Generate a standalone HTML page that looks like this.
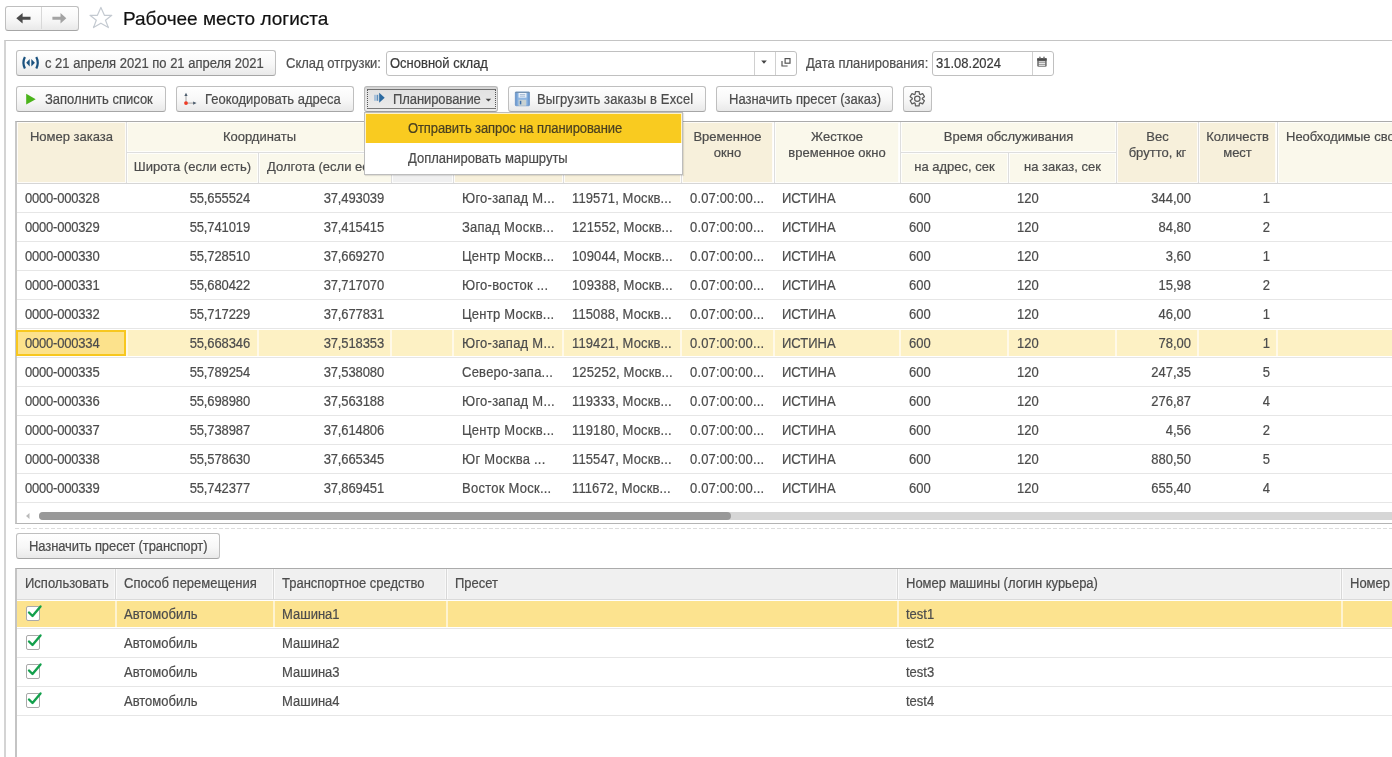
<!DOCTYPE html><html><head><meta charset="utf-8"><style>
*{box-sizing:border-box;margin:0;padding:0}
html,body{width:1392px;height:757px;overflow:hidden;background:#fff;font-family:"Liberation Sans", sans-serif;font-size:13px;color:#4c4c4c}
.a{position:absolute}
.t,.hd{-webkit-text-stroke:0.2px currentColor}
.t{transform:scaleY(1.08);transform-origin:0 12.3px}
#w{position:absolute;left:0;top:0;width:1392px;height:757px;overflow:hidden;will-change:transform}
.t{position:absolute;white-space:nowrap;line-height:15px}
.n{letter-spacing:-0.2px}
.c{letter-spacing:-0.12px}
.e{letter-spacing:0.25px}
.btn{position:absolute;border:1px solid #bfbfbf;border-bottom-color:#a6a6a6;border-radius:3px;background:linear-gradient(#ffffff,#f7f7f7 55%,#e9e9e9);}
.inp{position:absolute;border:1px solid #c0c0c0;border-radius:3px;background:#fff}
.hd{position:absolute;white-space:nowrap;text-align:center;line-height:16px;overflow:hidden}
</style></head><body><div id="w">
<div class="btn" style="left:5px;top:6px;width:74px;height:25px"></div>
<div class="a" style="left:41px;top:7px;width:1px;height:22px;background:#d8d8d8"></div>
<svg class="a" style="left:0;top:0" width="120" height="40"><path d="M16.3 18.2 L22.6 12.9 L22.6 16.8 L30.5 16.8 L30.5 19.7 L22.6 19.7 L22.6 23.4 Z" fill="#4a4a4a"/><path d="M66.3 18.2 L60.5 12.9 L60.5 16.8 L52.4 16.8 L52.4 19.7 L60.5 19.7 L60.5 23.4 Z" fill="#a3a3a3"/><path d="M100.9 7.4 L104.4 15.3 L111.8 15.3 L105.5 20.2 L108.4 27.6 L100.9 23.2 L93.5 27.6 L96.3 20.2 L90 15.3 L97.4 15.3 Z" fill="none" stroke="#c4cad1" stroke-width="1.2" stroke-linejoin="round"/></svg>
<div class="t" style="left:123px;top:8px;font-size:19px;line-height:22px;color:#111;transform:none">Рабочее место логиста</div>
<div class="a" style="left:4px;top:40px;width:1400px;height:800px;border-left:2px solid #d4d4d4;border-top:1px solid #c4c4c4"></div>
<div class="btn" style="left:16px;top:50px;width:260px;height:26px"></div>
<svg class="a" style="left:20px;top:54px" width="22" height="18"><path d="M4.9 3.1 Q2 8.85 4.9 14.6" fill="none" stroke="#1b527f" stroke-width="2.2"/><path d="M16.3 3.1 Q19.2 8.85 16.3 14.6" fill="none" stroke="#1b527f" stroke-width="2.2"/><path d="M6.2 8.8 L9.7 5 L9.7 12.4Z" fill="#1b527f"/><path d="M11.3 5 L14.9 8.8 L11.3 12.4Z" fill="#1b527f"/></svg>
<div class="t" style="left:45px;top:56px">с 21 апреля 2021 по 21 апреля 2021</div>
<div class="t" style="left:286px;top:56px;color:#505050">Склад отгрузки:</div>
<div class="inp" style="left:386px;top:51px;width:411px;height:25px"></div>
<div class="t" style="left:390px;top:56px;color:#3a3a3a">Основной склад</div>
<div class="a" style="left:754px;top:52px;width:1px;height:23px;background:#d0d0d0"></div>
<div class="a" style="left:775px;top:52px;width:1px;height:23px;background:#d0d0d0"></div>
<svg class="a" style="left:755px;top:52px" width="40" height="23"><path d="M6.2 8.6 L11.8 8.6 L9 11.8 Z" fill="#444"/><rect x="30.1" y="6.6" width="4.9" height="4.6" fill="none" stroke="#555" stroke-width="1.2"/><path d="M27 9.1 V14 H32.6" fill="none" stroke="#555" stroke-width="1.2"/></svg>
<div class="t" style="left:806px;top:56px;color:#505050">Дата планирования:</div>
<div class="inp" style="left:932px;top:51px;width:122px;height:25px"></div>
<div class="t" style="left:936px;top:56px;color:#3a3a3a">31.08.2024</div>
<div class="a" style="left:1032px;top:52px;width:1px;height:23px;background:#d0d0d0"></div>
<svg class="a" style="left:1033px;top:52px" width="20" height="23"><rect x="4.2" y="6.2" width="9.5" height="8.6" rx="1.3" fill="#737373"/><rect x="4.2" y="6.2" width="9.5" height="2.4" fill="#4a4a4a"/><circle cx="6.9" cy="5.6" r="1" fill="#8a8a8a"/><circle cx="11" cy="5.6" r="1" fill="#8a8a8a"/><rect x="5.8" y="9.3" width="6.3" height="1.1" fill="#f4f4f4"/><rect x="5.8" y="11.1" width="6.3" height="1.1" fill="#f4f4f4"/><rect x="5.8" y="12.8" width="6.3" height="1" fill="#f4f4f4"/></svg>
<div class="btn" style="left:16px;top:86px;width:150px;height:26px"></div>
<div class="t" style="left:45px;top:92px;letter-spacing:0px">Заполнить список</div>
<svg class="a" style="left:24px;top:92px" width="14" height="14"><path d="M2.2 1.8 L11.7 7.3 L2.2 12.4 Z" fill="#4bb41b"/></svg>
<div class="btn" style="left:176px;top:86px;width:178px;height:26px"></div>
<div class="t" style="left:205px;top:92px;letter-spacing:0px">Геокодировать адреса</div>
<svg class="a" style="left:180px;top:88px" width="24" height="22"><path d="M6 7 V15.1 H13.5" fill="none" stroke="#a6a6a6" stroke-width="1"/><path d="M4.4 8.1 L6 4.7 L7.6 8.1Z" fill="#4a5b6b"/><path d="M13.1 13.5 L16.5 15.1 L13.1 16.7Z" fill="#4a5b6b"/><circle cx="6" cy="15.1" r="1.9" fill="#ee3a24"/></svg>
<div class="a" style="left:364px;top:86px;width:134px;height:26px;border:1px solid #b8b8b8;border-bottom-color:#9c9c9c;border-radius:3px;background:linear-gradient(#cfcfcf,#e2e2e2 14%,#e6e6e6 50%,#ececec)"></div>
<div class="a" style="left:367px;top:89px;width:129px;height:20px;border-top:1px solid #707070;border-bottom:1px solid #7a7a7a;border-left:1px dotted #555;border-right:1px dotted #555"></div>
<div class="t" style="left:393px;top:92px;letter-spacing:-0.08px">Планирование</div>
<svg class="a" style="left:368px;top:88px" width="20" height="20"><rect x="6" y="6.8" width="3" height="6" fill="#a9c1d9"/><rect x="9" y="6.8" width="1.3" height="6" fill="#5f8fbb"/><rect x="10.3" y="6.8" width="0.9" height="6" fill="#c9d7e4"/><path d="M11.2 4.8 L16.7 9.8 L11.2 14.7Z" fill="#2a69a0"/></svg>
<svg class="a" style="left:483px;top:96px" width="10" height="8"><path d="M2.6 2.7 L8.2 2.7 L5.4 5.6Z" fill="#444"/></svg>
<div class="btn" style="left:508px;top:86px;width:198px;height:26px"></div>
<div class="t" style="left:537px;top:92px;letter-spacing:0.12px">Выгрузить заказы в Excel</div>
<svg class="a" style="left:514px;top:91px" width="17" height="16"><defs><linearGradient id="fg" x1="0" x2="1"><stop offset="0" stop-color="#5f8fc8"/><stop offset="0.2" stop-color="#8fb6e2"/><stop offset="0.8" stop-color="#8fb6e2"/><stop offset="1" stop-color="#5f8fc8"/></linearGradient></defs><rect x="1.3" y="0.9" width="14.2" height="13.9" rx="0.8" fill="url(#fg)" stroke="#5a88c0" stroke-width="0.6"/><rect x="1.3" y="0.9" width="14.2" height="0.9" fill="#6f8aa6"/><rect x="4.6" y="2" width="7.8" height="4.6" fill="#eef4fb"/><path d="M5.8 3.6 h5.4 M5.8 5.2 h5.4" stroke="#86a4c4" stroke-width="0.7"/><rect x="4.6" y="8.8" width="7.6" height="5.9" fill="#c9d2d2"/><rect x="5.8" y="9.8" width="1.5" height="3.6" fill="#3d6ea8"/></svg>
<div class="btn" style="left:716px;top:86px;width:177px;height:26px"></div>
<div class="t" style="left:729px;top:92px;letter-spacing:0px">Назначить пресет (заказ)</div>
<div class="btn" style="left:903px;top:86px;width:29px;height:26px"></div>
<svg class="a" style="left:907px;top:89px" width="21" height="20"><g transform="translate(10.3,9.7)"><path d="M-2.19 -4.49 L-1.79 -7.18 L1.79 -7.18 L2.19 -4.49 L2.80 -4.15 L5.32 -5.14 L7.11 -2.04 L4.99 -0.35 L4.99 0.35 L7.11 2.04 L5.32 5.14 L2.80 4.15 L2.19 4.49 L1.79 7.18 L-1.79 7.18 L-2.19 4.49 L-2.80 4.15 L-5.32 5.14 L-7.11 2.04 L-4.99 0.35 L-4.99 -0.35 L-7.11 -2.04 L-5.32 -5.14 L-2.80 -4.15Z" fill="none" stroke="#5e5e5e" stroke-width="1.25" stroke-linejoin="round"/><circle r="2.7" fill="none" stroke="#5e5e5e" stroke-width="1.25"/></g></svg>
<div class="a" style="left:15px;top:121px;width:1400px;height:403px;border-top:1px solid #ababab;border-left:2px solid #c8c8c8;border-bottom:1px solid #b4b4b4;background:#fff"></div>
<div class="a" style="left:17px;top:122px;width:109px;height:61px;background:#F7F0DB;box-shadow:inset 0 0 0 1px rgba(255,255,255,0.8)"></div>
<div class="hd" style="left:17px;top:129px;width:109px">Номер заказа</div>
<div class="a" style="left:127px;top:122px;width:265px;height:30px;background:#FAF8EB;box-shadow:inset 0 0 0 1px rgba(255,255,255,0.8)"></div>
<div class="hd" style="left:127px;top:129px;width:265px">Координаты</div>
<div class="a" style="left:127px;top:153px;width:131px;height:30px;background:#FAF8EB;box-shadow:inset 0 0 0 1px rgba(255,255,255,0.8)"></div>
<div class="hd" style="left:127px;top:159px;width:131px">Широта (если есть)</div>
<div class="a" style="left:259px;top:153px;width:133px;height:30px;background:#FAF8EB;box-shadow:inset 0 0 0 1px rgba(255,255,255,0.8)"></div>
<div class="hd" style="left:267px;top:159px;width:125px;text-align:left">Долгота (если есть)</div>
<div class="a" style="left:392px;top:122px;width:61px;height:61px;background:#F0F0F0;box-shadow:inset 0 0 0 1px rgba(255,255,255,0.8)"></div>
<div class="a" style="left:454px;top:122px;width:109px;height:61px;background:#F7F0DB;box-shadow:inset 0 0 0 1px rgba(255,255,255,0.8)"></div>
<div class="hd" style="left:454px;top:129px;width:109px">Зона доставки</div>
<div class="a" style="left:564px;top:122px;width:117px;height:61px;background:#F7F0DB;box-shadow:inset 0 0 0 1px rgba(255,255,255,0.8)"></div>
<div class="hd" style="left:564px;top:129px;width:117px">Адрес</div>
<div class="a" style="left:682px;top:122px;width:91px;height:61px;background:#F7F0DB;box-shadow:inset 0 0 0 1px rgba(255,255,255,0.8)"></div>
<div class="hd" style="left:682px;top:129px;width:91px">Временное<br>окно</div>
<div class="a" style="left:775px;top:122px;width:124px;height:61px;background:#FAF8EB;box-shadow:inset 0 0 0 1px rgba(255,255,255,0.8)"></div>
<div class="hd" style="left:775px;top:129px;width:124px">Жесткое<br>временное окно</div>
<div class="a" style="left:901px;top:122px;width:215px;height:30px;background:#FAF8EB;box-shadow:inset 0 0 0 1px rgba(255,255,255,0.8)"></div>
<div class="hd" style="left:901px;top:129px;width:215px">Время обслуживания</div>
<div class="a" style="left:901px;top:153px;width:107px;height:30px;background:#FAF8EB;box-shadow:inset 0 0 0 1px rgba(255,255,255,0.8)"></div>
<div class="hd" style="left:901px;top:159px;width:107px">на адрес, сек</div>
<div class="a" style="left:1009px;top:153px;width:107px;height:30px;background:#FAF8EB;box-shadow:inset 0 0 0 1px rgba(255,255,255,0.8)"></div>
<div class="hd" style="left:1009px;top:159px;width:107px">на заказ, сек</div>
<div class="a" style="left:1117px;top:122px;width:81px;height:61px;background:#F7F0DB;box-shadow:inset 0 0 0 1px rgba(255,255,255,0.8)"></div>
<div class="hd" style="left:1117px;top:129px;width:81px">Вес<br>брутто, кг</div>
<div class="a" style="left:1199px;top:122px;width:77px;height:61px;background:#F7F0DB;box-shadow:inset 0 0 0 1px rgba(255,255,255,0.8)"></div>
<div class="hd" style="left:1199px;top:129px;width:77px">Количеств<br>мест</div>
<div class="a" style="left:1278px;top:122px;width:122px;height:61px;background:#FAF8EB;box-shadow:inset 0 0 0 1px rgba(255,255,255,0.8)"></div>
<div class="hd" style="left:1286px;top:129px;width:114px;text-align:left">Необходимые свойства</div>
<div class="a" style="left:17px;top:183px;width:1400px;height:1px;background:#d6d6d6"></div>
<div class="a" style="left:127px;top:152px;width:265px;height:1px;background:#dedede"></div>
<div class="a" style="left:901px;top:152px;width:215px;height:1px;background:#dedede"></div>
<div class="a" style="left:126px;top:122px;width:1px;height:61px;background:#dedede"></div>
<div class="a" style="left:258px;top:152px;width:1px;height:31px;background:#dedede"></div>
<div class="a" style="left:391px;top:122px;width:1px;height:61px;background:#dedede"></div>
<div class="a" style="left:453px;top:122px;width:1px;height:61px;background:#dedede"></div>
<div class="a" style="left:563px;top:122px;width:1px;height:61px;background:#dedede"></div>
<div class="a" style="left:681px;top:122px;width:1px;height:61px;background:#dedede"></div>
<div class="a" style="left:774px;top:122px;width:1px;height:61px;background:#dedede"></div>
<div class="a" style="left:900px;top:122px;width:1px;height:61px;background:#dedede"></div>
<div class="a" style="left:1008px;top:152px;width:1px;height:31px;background:#dedede"></div>
<div class="a" style="left:1116px;top:122px;width:1px;height:61px;background:#dedede"></div>
<div class="a" style="left:1198px;top:122px;width:1px;height:61px;background:#dedede"></div>
<div class="a" style="left:1277px;top:122px;width:1px;height:61px;background:#dedede"></div>
<div class="a" style="left:17px;top:212px;width:1400px;height:1px;background:#e6e6e6"></div>
<div class="t n" style="left:25px;top:191px">0000-000328</div>
<div class="t c" style="left:127px;top:191px;width:123px;text-align:right">55,655524</div>
<div class="t c" style="left:259px;top:191px;width:125px;text-align:right">37,493039</div>
<div class="t e" style="left:462px;top:191px">Юго-запад М...</div>
<div class="t e" style="left:572px;top:191px;letter-spacing:0.12px">119571, Москв...</div>
<div class="t" style="left:690px;top:191px;letter-spacing:0.15px">0.07:00:00...</div>
<div class="t" style="left:782px;top:191px">ИСТИНА</div>
<div class="t" style="left:909px;top:191px">600</div>
<div class="t" style="left:1017px;top:191px">120</div>
<div class="t" style="left:1117px;top:191px;width:74px;text-align:right">344,00</div>
<div class="t" style="left:1199px;top:191px;width:71px;text-align:right">1</div>
<div class="a" style="left:17px;top:241px;width:1400px;height:1px;background:#e6e6e6"></div>
<div class="t n" style="left:25px;top:220px">0000-000329</div>
<div class="t c" style="left:127px;top:220px;width:123px;text-align:right">55,741019</div>
<div class="t c" style="left:259px;top:220px;width:125px;text-align:right">37,415415</div>
<div class="t e" style="left:462px;top:220px">Запад Москв...</div>
<div class="t e" style="left:572px;top:220px;letter-spacing:0.12px">121552, Москв...</div>
<div class="t" style="left:690px;top:220px;letter-spacing:0.15px">0.07:00:00...</div>
<div class="t" style="left:782px;top:220px">ИСТИНА</div>
<div class="t" style="left:909px;top:220px">600</div>
<div class="t" style="left:1017px;top:220px">120</div>
<div class="t" style="left:1117px;top:220px;width:74px;text-align:right">84,80</div>
<div class="t" style="left:1199px;top:220px;width:71px;text-align:right">2</div>
<div class="a" style="left:17px;top:270px;width:1400px;height:1px;background:#e6e6e6"></div>
<div class="t n" style="left:25px;top:249px">0000-000330</div>
<div class="t c" style="left:127px;top:249px;width:123px;text-align:right">55,728510</div>
<div class="t c" style="left:259px;top:249px;width:125px;text-align:right">37,669270</div>
<div class="t e" style="left:462px;top:249px">Центр Москв...</div>
<div class="t e" style="left:572px;top:249px;letter-spacing:0.12px">109044, Москв...</div>
<div class="t" style="left:690px;top:249px;letter-spacing:0.15px">0.07:00:00...</div>
<div class="t" style="left:782px;top:249px">ИСТИНА</div>
<div class="t" style="left:909px;top:249px">600</div>
<div class="t" style="left:1017px;top:249px">120</div>
<div class="t" style="left:1117px;top:249px;width:74px;text-align:right">3,60</div>
<div class="t" style="left:1199px;top:249px;width:71px;text-align:right">1</div>
<div class="a" style="left:17px;top:299px;width:1400px;height:1px;background:#e6e6e6"></div>
<div class="t n" style="left:25px;top:278px">0000-000331</div>
<div class="t c" style="left:127px;top:278px;width:123px;text-align:right">55,680422</div>
<div class="t c" style="left:259px;top:278px;width:125px;text-align:right">37,717070</div>
<div class="t e" style="left:462px;top:278px">Юго-восток ...</div>
<div class="t e" style="left:572px;top:278px;letter-spacing:0.12px">109388, Москв...</div>
<div class="t" style="left:690px;top:278px;letter-spacing:0.15px">0.07:00:00...</div>
<div class="t" style="left:782px;top:278px">ИСТИНА</div>
<div class="t" style="left:909px;top:278px">600</div>
<div class="t" style="left:1017px;top:278px">120</div>
<div class="t" style="left:1117px;top:278px;width:74px;text-align:right">15,98</div>
<div class="t" style="left:1199px;top:278px;width:71px;text-align:right">2</div>
<div class="a" style="left:17px;top:328px;width:1400px;height:1px;background:#e6e6e6"></div>
<div class="t n" style="left:25px;top:307px">0000-000332</div>
<div class="t c" style="left:127px;top:307px;width:123px;text-align:right">55,717229</div>
<div class="t c" style="left:259px;top:307px;width:125px;text-align:right">37,677831</div>
<div class="t e" style="left:462px;top:307px">Центр Москв...</div>
<div class="t e" style="left:572px;top:307px;letter-spacing:0.12px">115088, Москв...</div>
<div class="t" style="left:690px;top:307px;letter-spacing:0.15px">0.07:00:00...</div>
<div class="t" style="left:782px;top:307px">ИСТИНА</div>
<div class="t" style="left:909px;top:307px">600</div>
<div class="t" style="left:1017px;top:307px">120</div>
<div class="t" style="left:1117px;top:307px;width:74px;text-align:right">46,00</div>
<div class="t" style="left:1199px;top:307px;width:71px;text-align:right">1</div>
<div class="a" style="left:17px;top:330px;width:1400px;height:26px;background:#FDF1C4"></div>
<div class="a" style="left:257px;top:330px;width:2px;height:26px;background:#fff9e8"></div>
<div class="a" style="left:390px;top:330px;width:2px;height:26px;background:#fff9e8"></div>
<div class="a" style="left:452px;top:330px;width:2px;height:26px;background:#fff9e8"></div>
<div class="a" style="left:562px;top:330px;width:2px;height:26px;background:#fff9e8"></div>
<div class="a" style="left:680px;top:330px;width:2px;height:26px;background:#fff9e8"></div>
<div class="a" style="left:773px;top:330px;width:2px;height:26px;background:#fff9e8"></div>
<div class="a" style="left:899px;top:330px;width:2px;height:26px;background:#fff9e8"></div>
<div class="a" style="left:1007px;top:330px;width:2px;height:26px;background:#fff9e8"></div>
<div class="a" style="left:1115px;top:330px;width:2px;height:26px;background:#fff9e8"></div>
<div class="a" style="left:1197px;top:330px;width:2px;height:26px;background:#fff9e8"></div>
<div class="a" style="left:1276px;top:330px;width:2px;height:26px;background:#fff9e8"></div>
<div class="a" style="left:126px;top:330px;width:2px;height:26px;background:#fff9e8"></div>
<div class="a" style="left:16px;top:330px;width:110px;height:26px;background:#FCE28C;border:2px solid #F7C71F"></div>
<div class="a" style="left:17px;top:357px;width:1400px;height:1px;background:#e6e6e6"></div>
<div class="t n" style="left:25px;top:336px">0000-000334</div>
<div class="t c" style="left:127px;top:336px;width:123px;text-align:right">55,668346</div>
<div class="t c" style="left:259px;top:336px;width:125px;text-align:right">37,518353</div>
<div class="t e" style="left:462px;top:336px">Юго-запад М...</div>
<div class="t e" style="left:572px;top:336px;letter-spacing:0.12px">119421, Москв...</div>
<div class="t" style="left:690px;top:336px;letter-spacing:0.15px">0.07:00:00...</div>
<div class="t" style="left:782px;top:336px">ИСТИНА</div>
<div class="t" style="left:909px;top:336px">600</div>
<div class="t" style="left:1017px;top:336px">120</div>
<div class="t" style="left:1117px;top:336px;width:74px;text-align:right">78,00</div>
<div class="t" style="left:1199px;top:336px;width:71px;text-align:right">1</div>
<div class="a" style="left:17px;top:386px;width:1400px;height:1px;background:#e6e6e6"></div>
<div class="t n" style="left:25px;top:365px">0000-000335</div>
<div class="t c" style="left:127px;top:365px;width:123px;text-align:right">55,789254</div>
<div class="t c" style="left:259px;top:365px;width:125px;text-align:right">37,538080</div>
<div class="t e" style="left:462px;top:365px">Северо-запа...</div>
<div class="t e" style="left:572px;top:365px;letter-spacing:0.12px">125252, Москв...</div>
<div class="t" style="left:690px;top:365px;letter-spacing:0.15px">0.07:00:00...</div>
<div class="t" style="left:782px;top:365px">ИСТИНА</div>
<div class="t" style="left:909px;top:365px">600</div>
<div class="t" style="left:1017px;top:365px">120</div>
<div class="t" style="left:1117px;top:365px;width:74px;text-align:right">247,35</div>
<div class="t" style="left:1199px;top:365px;width:71px;text-align:right">5</div>
<div class="a" style="left:17px;top:415px;width:1400px;height:1px;background:#e6e6e6"></div>
<div class="t n" style="left:25px;top:394px">0000-000336</div>
<div class="t c" style="left:127px;top:394px;width:123px;text-align:right">55,698980</div>
<div class="t c" style="left:259px;top:394px;width:125px;text-align:right">37,563188</div>
<div class="t e" style="left:462px;top:394px">Юго-запад М...</div>
<div class="t e" style="left:572px;top:394px;letter-spacing:0.12px">119333, Москв...</div>
<div class="t" style="left:690px;top:394px;letter-spacing:0.15px">0.07:00:00...</div>
<div class="t" style="left:782px;top:394px">ИСТИНА</div>
<div class="t" style="left:909px;top:394px">600</div>
<div class="t" style="left:1017px;top:394px">120</div>
<div class="t" style="left:1117px;top:394px;width:74px;text-align:right">276,87</div>
<div class="t" style="left:1199px;top:394px;width:71px;text-align:right">4</div>
<div class="a" style="left:17px;top:444px;width:1400px;height:1px;background:#e6e6e6"></div>
<div class="t n" style="left:25px;top:423px">0000-000337</div>
<div class="t c" style="left:127px;top:423px;width:123px;text-align:right">55,738987</div>
<div class="t c" style="left:259px;top:423px;width:125px;text-align:right">37,614806</div>
<div class="t e" style="left:462px;top:423px">Центр Москв...</div>
<div class="t e" style="left:572px;top:423px;letter-spacing:0.12px">119180, Москв...</div>
<div class="t" style="left:690px;top:423px;letter-spacing:0.15px">0.07:00:00...</div>
<div class="t" style="left:782px;top:423px">ИСТИНА</div>
<div class="t" style="left:909px;top:423px">600</div>
<div class="t" style="left:1017px;top:423px">120</div>
<div class="t" style="left:1117px;top:423px;width:74px;text-align:right">4,56</div>
<div class="t" style="left:1199px;top:423px;width:71px;text-align:right">2</div>
<div class="a" style="left:17px;top:473px;width:1400px;height:1px;background:#e6e6e6"></div>
<div class="t n" style="left:25px;top:452px">0000-000338</div>
<div class="t c" style="left:127px;top:452px;width:123px;text-align:right">55,578630</div>
<div class="t c" style="left:259px;top:452px;width:125px;text-align:right">37,665345</div>
<div class="t e" style="left:462px;top:452px">Юг Москва ...</div>
<div class="t e" style="left:572px;top:452px;letter-spacing:0.12px">115547, Москв...</div>
<div class="t" style="left:690px;top:452px;letter-spacing:0.15px">0.07:00:00...</div>
<div class="t" style="left:782px;top:452px">ИСТИНА</div>
<div class="t" style="left:909px;top:452px">600</div>
<div class="t" style="left:1017px;top:452px">120</div>
<div class="t" style="left:1117px;top:452px;width:74px;text-align:right">880,50</div>
<div class="t" style="left:1199px;top:452px;width:71px;text-align:right">5</div>
<div class="a" style="left:17px;top:502px;width:1400px;height:1px;background:#e6e6e6"></div>
<div class="t n" style="left:25px;top:481px">0000-000339</div>
<div class="t c" style="left:127px;top:481px;width:123px;text-align:right">55,742377</div>
<div class="t c" style="left:259px;top:481px;width:125px;text-align:right">37,869451</div>
<div class="t e" style="left:462px;top:481px">Восток Моск...</div>
<div class="t e" style="left:572px;top:481px;letter-spacing:0.12px">111672, Москв...</div>
<div class="t" style="left:690px;top:481px;letter-spacing:0.15px">0.07:00:00...</div>
<div class="t" style="left:782px;top:481px">ИСТИНА</div>
<div class="t" style="left:909px;top:481px">600</div>
<div class="t" style="left:1017px;top:481px">120</div>
<div class="t" style="left:1117px;top:481px;width:74px;text-align:right">655,40</div>
<div class="t" style="left:1199px;top:481px;width:71px;text-align:right">4</div>
<div class="a" style="left:39px;top:512px;width:1400px;height:8px;background:#d6d6d6;border-radius:4px"></div>
<div class="a" style="left:39px;top:512px;width:692px;height:8px;background:#999;border-radius:4px"></div>
<svg class="a" style="left:24px;top:512px" width="8" height="8"><path d="M5.5 1 L2 4 L5.5 7Z" fill="#bbb"/></svg>
<div class="a" style="left:15px;top:528px;width:1400px;height:1px;background:repeating-linear-gradient(90deg,#dcdcdc 0 4px,transparent 4px 6px)"></div>
<div class="btn" style="left:16px;top:533px;width:204px;height:26px"></div>
<div class="t" style="left:29px;top:539px;letter-spacing:-0.1px">Назначить пресет (транспорт)</div>
<div class="a" style="left:15px;top:568px;width:1400px;height:200px;border-top:1px solid #ababab;border-left:2px solid #c4c4c4;background:#fff"></div>
<div class="a" style="left:17px;top:569px;width:1400px;height:30px;background:#F0F0F0"></div>
<div class="a" style="left:17px;top:599px;width:1400px;height:1px;background:#dadada"></div>
<div class="a" style="left:115px;top:569px;width:1px;height:30px;background:#d8d8d8"></div>
<div class="a" style="left:116px;top:569px;width:1px;height:30px;background:#fafafa"></div>
<div class="a" style="left:114px;top:569px;width:1px;height:30px;background:#f8f8f8"></div>
<div class="a" style="left:273px;top:569px;width:1px;height:30px;background:#d8d8d8"></div>
<div class="a" style="left:274px;top:569px;width:1px;height:30px;background:#fafafa"></div>
<div class="a" style="left:272px;top:569px;width:1px;height:30px;background:#f8f8f8"></div>
<div class="a" style="left:446px;top:569px;width:1px;height:30px;background:#d8d8d8"></div>
<div class="a" style="left:447px;top:569px;width:1px;height:30px;background:#fafafa"></div>
<div class="a" style="left:445px;top:569px;width:1px;height:30px;background:#f8f8f8"></div>
<div class="a" style="left:897px;top:569px;width:1px;height:30px;background:#d8d8d8"></div>
<div class="a" style="left:898px;top:569px;width:1px;height:30px;background:#fafafa"></div>
<div class="a" style="left:896px;top:569px;width:1px;height:30px;background:#f8f8f8"></div>
<div class="a" style="left:1341px;top:569px;width:1px;height:30px;background:#d8d8d8"></div>
<div class="a" style="left:1342px;top:569px;width:1px;height:30px;background:#fafafa"></div>
<div class="a" style="left:1340px;top:569px;width:1px;height:30px;background:#f8f8f8"></div>
<div class="t" style="left:25px;top:576px">Использовать</div>
<div class="t" style="left:124px;top:576px">Способ перемещения</div>
<div class="t" style="left:282px;top:576px">Транспортное средство</div>
<div class="t" style="left:455px;top:576px">Пресет</div>
<div class="t" style="left:906px;top:576px">Номер машины (логин курьера)</div>
<div class="t" style="left:1350px;top:576px">Номер телефона</div>
<div class="a" style="left:17px;top:601px;width:1400px;height:26px;background:#FCE38F"></div>
<div class="a" style="left:115px;top:601px;width:2px;height:26px;background:#fef3d0"></div>
<div class="a" style="left:273px;top:601px;width:2px;height:26px;background:#fef3d0"></div>
<div class="a" style="left:446px;top:601px;width:2px;height:26px;background:#fef3d0"></div>
<div class="a" style="left:897px;top:601px;width:2px;height:26px;background:#fef3d0"></div>
<div class="a" style="left:1341px;top:601px;width:2px;height:26px;background:#fef3d0"></div>
<div class="a" style="left:17px;top:628px;width:1400px;height:1px;background:#e6e6e6"></div>
<div class="a" style="left:26px;top:606px;width:14px;height:15px;border:1px solid #a9a9a9;border-radius:2px;background:#fff"></div>
<svg class="a" style="left:26px;top:604px" width="18" height="16"><path d="M3 8.5 L6.5 12 L14.5 2.5" fill="none" stroke="#13a04c" stroke-width="2.4" stroke-linecap="round" stroke-linejoin="round"/></svg>
<div class="t" style="left:124px;top:607px">Автомобиль</div>
<div class="t" style="left:282px;top:607px">Машина1</div>
<div class="t" style="left:906px;top:607px">test1</div>
<div class="a" style="left:17px;top:657px;width:1400px;height:1px;background:#e6e6e6"></div>
<div class="a" style="left:26px;top:635px;width:14px;height:15px;border:1px solid #a9a9a9;border-radius:2px;background:#fff"></div>
<svg class="a" style="left:26px;top:633px" width="18" height="16"><path d="M3 8.5 L6.5 12 L14.5 2.5" fill="none" stroke="#13a04c" stroke-width="2.4" stroke-linecap="round" stroke-linejoin="round"/></svg>
<div class="t" style="left:124px;top:636px">Автомобиль</div>
<div class="t" style="left:282px;top:636px">Машина2</div>
<div class="t" style="left:906px;top:636px">test2</div>
<div class="a" style="left:17px;top:686px;width:1400px;height:1px;background:#e6e6e6"></div>
<div class="a" style="left:26px;top:664px;width:14px;height:15px;border:1px solid #a9a9a9;border-radius:2px;background:#fff"></div>
<svg class="a" style="left:26px;top:662px" width="18" height="16"><path d="M3 8.5 L6.5 12 L14.5 2.5" fill="none" stroke="#13a04c" stroke-width="2.4" stroke-linecap="round" stroke-linejoin="round"/></svg>
<div class="t" style="left:124px;top:665px">Автомобиль</div>
<div class="t" style="left:282px;top:665px">Машина3</div>
<div class="t" style="left:906px;top:665px">test3</div>
<div class="a" style="left:17px;top:715px;width:1400px;height:1px;background:#e6e6e6"></div>
<div class="a" style="left:26px;top:693px;width:14px;height:15px;border:1px solid #a9a9a9;border-radius:2px;background:#fff"></div>
<svg class="a" style="left:26px;top:691px" width="18" height="16"><path d="M3 8.5 L6.5 12 L14.5 2.5" fill="none" stroke="#13a04c" stroke-width="2.4" stroke-linecap="round" stroke-linejoin="round"/></svg>
<div class="t" style="left:124px;top:694px">Автомобиль</div>
<div class="t" style="left:282px;top:694px">Машина4</div>
<div class="t" style="left:906px;top:694px">test4</div>
<div class="a" style="left:364px;top:112px;width:319px;height:63px;background:#fff;border:1px solid #bdbdbd;box-shadow:1px 1px 1px rgba(0,0,0,0.10)"></div>
<div class="a" style="left:365px;top:113px;width:317px;height:30px;background:#fff3c8"></div>
<div class="a" style="left:366px;top:114px;width:315px;height:29px;background:#F9CB20"></div>
<div class="t" style="left:408px;top:121px;color:#4a4020;letter-spacing:-0.1px">Отправить запрос на планирование</div>
<div class="t" style="left:408px;top:151px">Допланировать маршруты</div>
</div></body></html>
